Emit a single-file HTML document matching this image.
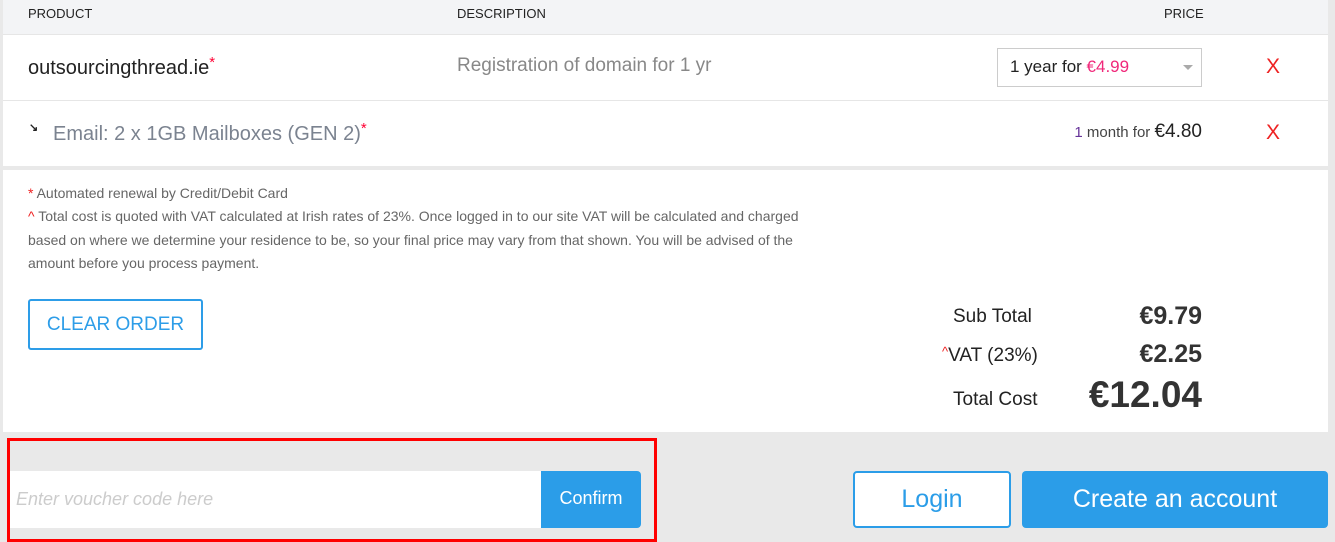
<!DOCTYPE html>
<html><head><meta charset="utf-8"><style>
*{box-sizing:border-box;margin:0;padding:0}
body{width:1335px;height:542px;background:#e9e9e9;font-family:"Liberation Sans",sans-serif;position:relative;overflow:hidden}
.a{position:absolute;white-space:nowrap}
</style></head><body>
<div class="a" style="left:3px;top:0;width:1325px;height:432px;background:#fff"></div>
<div class="a" style="left:3px;top:0;width:1325px;height:35px;background:#f3f4f6;border-bottom:1px solid #e6e6e6"></div>
<div class="a" style="left:28px;top:6px;font-size:13px;color:#222">PRODUCT</div>
<div class="a" style="left:457px;top:6px;font-size:13px;color:#222">DESCRIPTION</div>
<div class="a" style="left:1164px;top:6px;font-size:13px;color:#222">PRICE</div>
<div class="a" style="left:28px;top:54px;font-size:20px;color:#222">outsourcingthread.ie<span style="color:#f03;font-size:15px;vertical-align:7px">*</span></div>
<div class="a" style="left:457px;top:55px;font-size:19px;color:#888">Registration of domain for 1 yr</div>
<div class="a" style="left:997px;top:48px;width:205px;height:39px;border:1px solid #ccc"></div>
<div class="a" style="left:1010px;top:57px;font-size:17px;color:#222">1 year for <span style="color:#f0287a">€4.99</span></div>
<div class="a" style="left:1183px;top:65px;width:0;height:0;border-left:5px solid transparent;border-right:5px solid transparent;border-top:5px solid #aaa"></div>
<div class="a" style="left:1266px;top:55px;font-size:21px;color:#e22">X</div>
<div class="a" style="left:3px;top:100px;width:1325px;height:1px;background:#e6e6e6"></div>
<div class="a" style="left:29px;top:121px;font-size:11px;color:#222;font-weight:bold">&#8600;</div>
<div class="a" style="left:53px;top:120px;font-size:20px;color:#7b8390">Email: 2 x 1GB Mailboxes (GEN 2)<span style="color:#f03;font-size:15px;vertical-align:7px">*</span></div>
<div class="a" style="left:1000px;top:121px;width:202px;text-align:right;font-size:15px;color:#444"><span style="color:#639">1</span> month for <span style="font-size:19px;color:#222">€4.80</span></div>
<div class="a" style="left:1266px;top:121px;font-size:21px;color:#e22">X</div>
<div class="a" style="left:3px;top:166px;width:1325px;height:4px;background:#e9e9e9"></div>
<div class="a" style="left:28px;top:182px;font-size:14px;color:#666;line-height:23.3px;white-space:normal;width:805px"><span style="color:#e22">*</span> Automated renewal by Credit/Debit Card<br><span style="color:#e22">^</span> Total cost is quoted with VAT calculated at Irish rates of 23%. Once logged in to our site VAT will be calculated and charged based on where we determine your residence to be, so your final price may vary from that shown. You will be advised of the amount before you process payment.</div>
<div class="a" style="left:28px;top:299px;width:175px;height:51px;border:2px solid #2d9de8;border-radius:3px;color:#2d9de8;font-size:19px;text-align:center;line-height:47px">CLEAR ORDER</div>
<div class="a" style="left:953px;top:306px;font-size:19px;color:#222">Sub Total</div>
<div class="a" style="left:1100px;top:302px;width:102px;text-align:right;font-size:25px;font-weight:bold;color:#333">€9.79</div>
<div class="a" style="left:942px;top:344px;font-size:19px;color:#222"><span style="color:#e22;font-size:13px;vertical-align:5px">^</span>VAT (23%)</div>
<div class="a" style="left:1100px;top:340px;width:102px;text-align:right;font-size:25px;font-weight:bold;color:#333">€2.25</div>
<div class="a" style="left:953px;top:389px;font-size:19px;color:#222">Total Cost</div>
<div class="a" style="left:1040px;top:374px;width:162px;text-align:right;font-size:37px;font-weight:bold;color:#333">€12.04</div>
<div class="a" style="left:8px;top:471px;width:533px;height:57px;background:#fff"></div>
<div class="a" style="left:16px;top:489px;font-size:18px;font-style:italic;color:#ccc">Enter voucher code here</div>
<div class="a" style="left:541px;top:471px;width:100px;height:57px;background:#2b9de8;border-radius:0 4px 4px 0;color:#fff;font-size:18px;text-align:center;line-height:55px">Confirm</div>
<div class="a" style="left:7px;top:438px;width:650px;height:104px;border:3px solid #f00"></div>
<div class="a" style="left:853px;top:471px;width:158px;height:57px;background:#fff;border:2px solid #2b9de8;border-radius:4px;color:#2b9de8;font-size:25px;text-align:center;line-height:53px">Login</div>
<div class="a" style="left:1022px;top:471px;width:306px;height:57px;background:#2b9de8;border-radius:4px;color:#fff;font-size:25px;text-align:center;line-height:57px">Create an account</div>
</body></html>
